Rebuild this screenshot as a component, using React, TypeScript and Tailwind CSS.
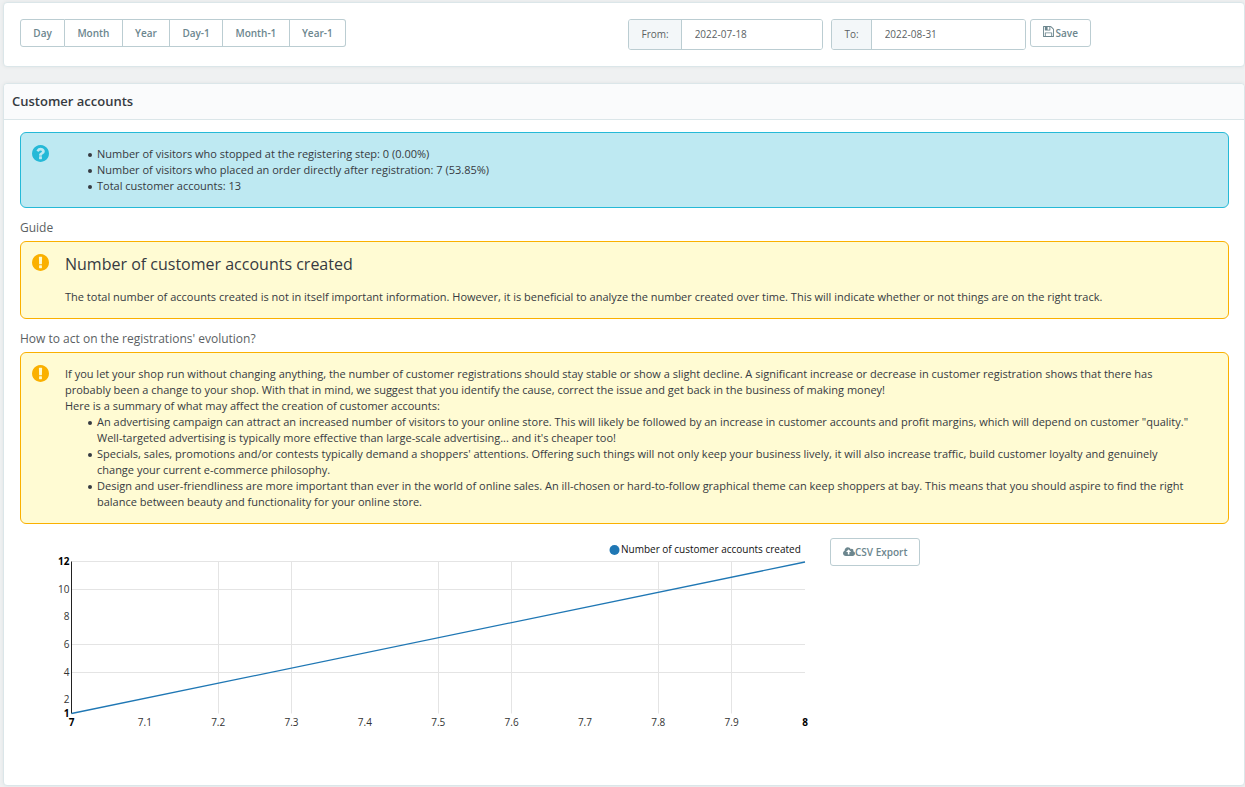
import React from 'react';

const ICONS = {
  save: {
    width: 1536,
    path: 'M384 0h768v384h-768v-384zM1280 0h128v896q0 14 -10 38.5t-20 34.5l-281 281q-10 10 -34 20t-39 10v-416q0 -40 -28 -68t-68 -28h-576q-40 0 -68 28t-28 68v416h-128v-1280h128v416q0 40 28 68t68 28h832q40 0 68 -28t28 -68v-416zM896 928v320q0 13 -9.5 22.5t-22.5 9.5h-192q-13 0 -22.5 -9.5t-9.5 -22.5v-320q0 -13 9.5 -22.5t22.5 -9.5h192q13 0 22.5 9.5t9.5 22.5zM1536 896v-928q0 -40 -28 -68t-68 -28h-1344q-40 0 -68 28t-28 68v1344q0 40 28 68t68 28h928q40 0 88 -20t76 -48l280 -280q28 -28 48 -76t20 -88z',
  },
  cloudUpload: {
    width: 1920,
    path: 'M1280 672q0 14 -9 23l-352 352q-9 9 -23 9t-23 -9l-351 -351q-10 -12 -10 -24q0 -14 9 -23t23 -9h224v-352q0 -13 9.5 -22.5t22.5 -9.5h192q13 0 22.5 9.5t9.5 22.5v352h224q13 0 22.5 9.5t9.5 22.5zM1920 384q0 -159 -112.5 -271.5t-271.5 -112.5h-1088q-185 0 -316.5 131.5t-131.5 316.5q0 130 70 240t188 165q-2 30 -2 43q0 212 150 362t362 150q156 0 285.5 -87t188.5 -231q71 62 166 62q106 0 181 -75t75 -181q0 -76 -41 -138q130 -31 213.5 -135.5t83.5 -238.5z',
  },
  question: {
    width: 1536,
    path: 'M896 160v192q0 14 -9 23t-23 9h-192q-14 0 -23 -9t-9 -23v-192q0 -14 9 -23t23 -9h192q14 0 23 9t9 23zM1152 832q0 88 -55.5 163t-138.5 116t-170 41q-243 0 -371 -213q-15 -24 8 -42l132 -100q7 -6 19 -6q16 0 25 12q53 68 86 92q34 24 86 24q48 0 85.5 -26t37.5 -59q0 -38 -20 -61t-68 -45q-63 -28 -115.5 -86.5t-52.5 -125.5v-36q0 -14 9 -23t23 -9h192q14 0 23 9t9 23q0 19 21.5 49.5t54.5 49.5q32 18 49 28.5t46 35t44.5 48t28 60.5t12.5 81zM1536 640q0 -209 -103 -385.5t-279.5 -279.5t-385.5 -103t-385.5 103t-279.5 279.5t-103 385.5t103 385.5t279.5 279.5t385.5 103t385.5 -103t279.5 -279.5t103 -385.5z',
  },
  exclamation: {
    width: 1536,
    path: 'M768 1408q209 0 385.5 -103t279.5 -279.5t103 -385.5t-103 -385.5t-279.5 -279.5t-385.5 -103t-385.5 103t-279.5 279.5t-103 385.5t103 385.5t279.5 279.5t385.5 103zM896 161v190q0 14 -9 23.5t-22 9.5h-192q-13 0 -23 -10t-10 -23v-190q0 -13 10 -23t23 -10h192q13 0 22 9.5t9 23.5zM894 505l18 621q0 12 -10 18q-10 8 -24 8h-220q-14 0 -24 -8q-10 -6 -10 -18l17 -621q0 -10 10 -17.5t24 -7.5h185q14 0 23.5 7.5t10.5 17.5z',
  },
};

function Icon({ name, className }: { name: keyof typeof ICONS; className: string }) {
  const icon = ICONS[name];
  return (
    <svg viewBox={`0 -1408 ${icon.width} 1536`} className={className} fill="currentColor" aria-hidden="true">
      <path d={icon.path} transform="scale(1,-1)" />
    </svg>
  );
}

const periods = ['Day', 'Month', 'Year', 'Day-1', 'Month-1', 'Year-1'];

function DateField({ id, label, value }: { id: string; label: string; value: string }) {
  return (
    <div className="flex h-[31px] w-[195px] overflow-hidden rounded-[3px] border border-[#bbcdd2] text-[10px] text-[#5b5f63]">
      <label htmlFor={id} className="flex items-center border-r border-[#bbcdd2] bg-[#f3f7f9] pl-[13px] pr-3">
        {label}
      </label>
      <input id={id} type="text" defaultValue={value} className="min-w-0 flex-1 bg-white px-[13px] outline-none" />
    </div>
  );
}

function Alert({ kind, children }: { kind: 'info' | 'warning'; children: React.ReactNode }) {
  const info = kind === 'info';
  return (
    <div
      className={`flex rounded-[6px] border pl-[11px] pr-8 text-[11px] leading-4 text-[#363a41] ${
        info ? 'border-[#25b9d7] bg-[#bee9f2]' : 'border-[#fab000] bg-[#fffbd3]'
      }`}
    >
      <Icon
        name={info ? 'question' : 'exclamation'}
        className={`mt-3 size-[17px] shrink-0 ${info ? 'text-[#25b9d7]' : 'text-[#fab000]'}`}
      />
      <div className="ml-4 min-w-0 flex-1 py-[13px]">{children}</div>
    </div>
  );
}

function Bullet({ children }: { children: React.ReactNode }) {
  return (
    <li className="relative before:absolute before:top-[7px] before:-left-[9px] before:size-1 before:rounded-full before:bg-[#363a41]">
      {children}
    </li>
  );
}

const xTicks = ['7', '7.1', '7.2', '7.3', '7.4', '7.5', '7.6', '7.7', '7.8', '7.9', '8'];
const xGrid = [2, 3, 5, 6, 8, 9];
const yTicks = [1, 2, 4, 6, 8, 10, 12];
const yGrid = [4, 6, 10, 12];
const LEFT = 51.5;
const RIGHT = 785;
const TOP = 23.5;
const BOTTOM = 175.5;
const px = (i: number) => LEFT + ((RIGHT - LEFT) * i) / 10;
const py = (v: number) => BOTTOM - ((BOTTOM - TOP) * (v - 1)) / 11;
const crisp = (n: number) => Math.floor(n) + 0.5;

function Chart() {
  return (
    <svg viewBox="0 0 798 232" className="w-full text-[10px]" role="img" aria-label="Number of customer accounts created">
      {xGrid.map((i) => (
        <line key={i} x1={crisp(px(i))} x2={crisp(px(i))} y1={TOP} y2={BOTTOM} stroke="#e4e4e4" />
      ))}
      {yGrid.map((v) => (
        <line key={v} x1={LEFT} x2={RIGHT} y1={crisp(py(v))} y2={crisp(py(v))} stroke="#e4e4e4" />
      ))}
      <line x1={LEFT} x2={LEFT} y1={TOP} y2={BOTTOM} stroke="#222" />
      <line x1={LEFT} x2={RIGHT} y1={BOTTOM} y2={TOP + 0.5} stroke="#1f77b4" strokeWidth="1.3" />
      {xTicks.map((t, i) => {
        const end = i === 0 || i === 10;
        return (
          <text key={t} x={px(i)} y="188" textAnchor="middle" fill={end ? '#000' : '#333'} className={end ? 'font-bold' : ''}>
            {t}
          </text>
        );
      })}
      {yTicks.map((t) => {
        const end = t === 1 || t === 12;
        return (
          <text key={t} x="49.5" y={Math.round(py(t) + 3.5)} textAnchor="end" fill={end ? '#000' : '#333'} className={end ? 'font-bold' : ''}>
            {t}
          </text>
        );
      })}
      <circle cx="594.5" cy="12" r="5" fill="#1f77b4" />
      <text x="601" y="15" fill="#111">
        Number of customer accounts created
      </text>
    </svg>
  );
}

const panel = 'rounded-[4px] border border-[#dbe6e9] bg-white shadow-[0_0_4px_rgba(0,0,0,0.06)]';
const button = 'flex h-7 items-center justify-center border-[#bbcdd2] bg-white text-[10px] font-semibold text-[#6c868e]';

export default function App() {
  return (
    <main className="flex min-h-screen flex-col gap-4 bg-[#eff1f2] pb-px pl-[3px] pt-[2px] font-['Open_Sans',sans-serif]">
      <section className={`${panel} grid grid-cols-2 gap-[7px] p-4`}>
        <div className="flex w-[326px]">
          {periods.map((p) => (
            <button
              key={p}
              type="button"
              className={`${button} grow border-y border-r px-3 first:rounded-l-[3px] first:border-l last:rounded-r-[3px]`}
            >
              {p}
            </button>
          ))}
        </div>
        <div className="flex">
          <DateField id="from" label="From:" value="2022-07-18" />
          <div className="ml-2">
            <DateField id="to" label="To:" value="2022-08-31" />
          </div>
          <button type="button" className={`${button} ml-1 gap-0.5 rounded-[3px] border px-3`}>
            <Icon name="save" className="mb-[3px] size-[11px]" />
            Save
          </button>
        </div>
      </section>

      <section className={`${panel} flex-1`}>
        <h1 className="rounded-t-[4px] border-b border-[#dbe6e9] bg-[#fafbfc] px-2 py-2 text-[13px] font-semibold leading-[19px] text-[#363a41]">
          Customer accounts
        </h1>
        <div className="pl-4 pr-[15px] pt-3">
          <Alert kind="info">
            <ul className="pl-8">
              <Bullet>Number of visitors who stopped at the registering step: 0 (0.00%)</Bullet>
              <Bullet>Number of visitors who placed an order directly after registration: 7 (53.85%)</Bullet>
              <Bullet>Total customer accounts: 13</Bullet>
            </ul>
          </Alert>

          <h2 className="pb-[5px] pt-3 text-[12px] leading-4 text-[#5b5f63]">Guide</h2>
          <Alert kind="warning">
            <h3 className="text-[16px] leading-[19px]">Number of customer accounts created</h3>
            <p className="pt-[15px]">
              The total number of accounts created is not in itself important information. However, it is beneficial to
              analyze the number created over time. This will indicate whether or not things are on the right track.
            </p>
          </Alert>

          <h2 className="pb-[5px] pt-3 text-[12px] leading-4 text-[#5b5f63]">
            How to act on the registrations' evolution?
          </h2>
          <Alert kind="warning">
            <p>
              If you let your shop run without changing anything, the number of customer registrations should stay
              stable or show a slight decline. A significant increase or decrease in customer registration shows that
              there has probably been a change to your shop. With that in mind, we suggest that you identify the cause,
              correct the issue and get back in the business of making money!
            </p>
            <p>Here is a summary of what may affect the creation of customer accounts:</p>
            <ul className="pl-8">
              <Bullet>
                An advertising campaign can attract an increased number of visitors to your online store. This will
                likely be followed by an increase in customer accounts and profit margins, which will depend on customer
                "quality." Well-targeted advertising is typically more effective than large-scale advertising... and
                it's cheaper too!
              </Bullet>
              <Bullet>
                Specials, sales, promotions and/or contests typically demand a shoppers' attentions. Offering such
                things will not only keep your business lively, it will also increase traffic, build customer loyalty
                and genuinely change your current e-commerce philosophy.
              </Bullet>
              <Bullet>
                Design and user-friendliness are more important than ever in the world of online sales. An ill-chosen or
                hard-to-follow graphical theme can keep shoppers at bay. This means that you should aspire to find the
                right balance between beauty and functionality for your online store.
              </Bullet>
            </ul>
          </Alert>

          <div className="grid grid-cols-[2fr_1fr] items-start gap-3 pt-[14px]">
            <Chart />
            <a href="#export" className={`${button} w-fit rounded-[3px] border px-3`}>
              <Icon name="cloudUpload" className="h-[10px] w-3" />
              CSV Export
            </a>
          </div>
        </div>
      </section>
    </main>
  );
}
